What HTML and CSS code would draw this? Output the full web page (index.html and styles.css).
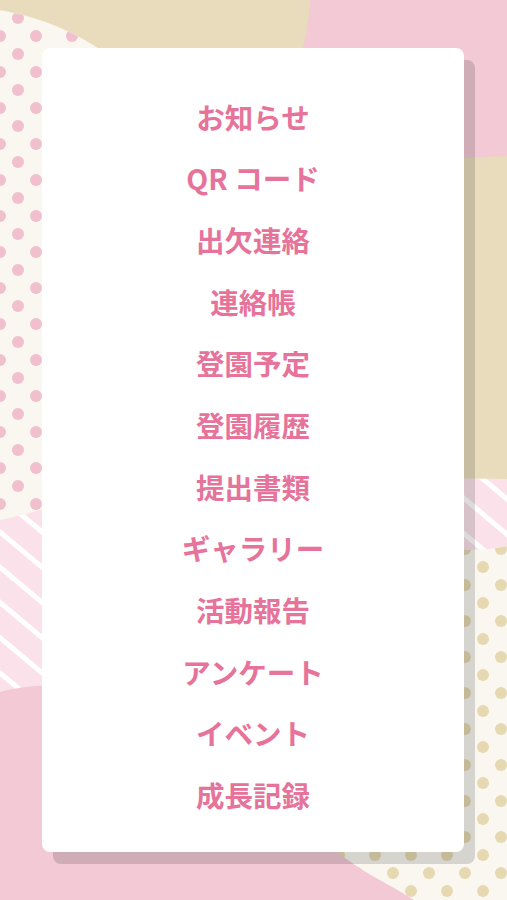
FILE: index.html
```html
<!DOCTYPE html>
<html lang="ja">
<head>
<meta charset="utf-8">
<title>メニュー</title>
<link rel="stylesheet" href="styles.css">
</head>
<body>
<div class="bg" aria-hidden="true">
  <svg width="507" height="900" viewBox="0 0 507 900" xmlns="http://www.w3.org/2000/svg">
    <defs>
      <pattern id="pinkdots" width="36" height="36" patternUnits="userSpaceOnUse">
        <circle cx="0" cy="0" r="6" fill="#f1c0cf"/>
        <circle cx="36" cy="0" r="6" fill="#f1c0cf"/>
        <circle cx="0" cy="36" r="6" fill="#f1c0cf"/>
        <circle cx="36" cy="36" r="6" fill="#f1c0cf"/>
        <circle cx="18" cy="18" r="6" fill="#f1c0cf"/>
      </pattern>
      <pattern id="beigedots" x="15" y="27" width="36" height="36" patternUnits="userSpaceOnUse">
        <circle cx="0" cy="0" r="6" fill="#e6d9b2"/>
        <circle cx="36" cy="0" r="6" fill="#e6d9b2"/>
        <circle cx="0" cy="36" r="6" fill="#e6d9b2"/>
        <circle cx="36" cy="36" r="6" fill="#e6d9b2"/>
        <circle cx="18" cy="18" r="6" fill="#e6d9b2"/>
      </pattern>
      <pattern id="stripes" width="27" height="27" patternUnits="userSpaceOnUse" patternTransform="rotate(40)">
        <rect width="27" height="27" fill="#fbe2ea"/>
        <rect width="27" height="5" fill="#ffffff"/>
      </pattern>
    </defs>
    <rect width="507" height="900" fill="#f2c9d4"/>
    <circle cx="20" cy="-20" r="291" fill="#e8dcbc"/>
    <rect x="0" y="460" width="80" height="260" fill="url(#stripes)"/>
    <ellipse cx="-40" cy="265" rx="255" ry="258" fill="#faf7f0"/>
    <ellipse cx="-40" cy="265" rx="255" ry="258" fill="url(#pinkdots)"/>
    <path d="M280,165 L507,156 L507,482 L280,482 Z" fill="#e8dcbc"/>
    <path d="M280,476 L507,479 L507,547 Q490,553 470,553 L280,553 Z" fill="url(#stripes)"/>
    <path d="M280,550 L470,550 Q490,550 507,546 L507,900 L280,900 Z" fill="#faf7f0"/>
    <path d="M280,550 L470,550 Q490,550 507,546 L507,900 L280,900 Z" fill="url(#beigedots)"/>
    <path d="M0,692 C30,682 120,680 200,700 C280,720 300,815 335,850 C360,872 390,884 414,900 L0,900 Z" fill="#f2c9d4"/>
  </svg>
</div>
<div class="page">
  <main class="card">
    <nav class="menu">
      <a class="item" href="#">お知らせ</a>
      <a class="item" href="#">QR コード</a>
      <a class="item" href="#">出欠連絡</a>
      <a class="item" href="#">連絡帳</a>
      <a class="item" href="#">登園予定</a>
      <a class="item" href="#">登園履歴</a>
      <a class="item" href="#">提出書類</a>
      <a class="item" href="#">ギャラリー</a>
      <a class="item" href="#">活動報告</a>
      <a class="item" href="#">アンケート</a>
      <a class="item" href="#">イベント</a>
      <a class="item" href="#">成長記録</a>
    </nav>
  </main>
</div>
</body>
</html>
```
FILE: styles.css
```css
html, body {
  margin: 0;
  padding: 0;
}
body {
  width: 507px;
  height: 900px;
  overflow: hidden;
  position: relative;
  background: #f2c9d4;
  font-family: "Noto Sans CJK JP", "Noto Sans", sans-serif;
}
.bg {
  position: absolute;
  inset: 0;
  z-index: 0;
}
.bg svg {
  display: block;
}
.page {
  position: relative;
  z-index: 1;
  padding: 48px 43px 0 42px;
}
.card {
  background: #ffffff;
  border-radius: 8px;
  height: 804px;
  box-sizing: border-box;
  padding-top: 38px;
  box-shadow: 11px 12px 0 rgba(0, 0, 0, 0.14);
}
.menu {
  display: flex;
  flex-direction: column;
  align-items: center;
}
.item {
  height: 61.7px;
  display: flex;
  align-items: center;
  justify-content: center;
  font-size: 28.5px;
  line-height: 1;
  font-weight: 700;
  color: #e6739a;
  text-decoration: none;
}
```
